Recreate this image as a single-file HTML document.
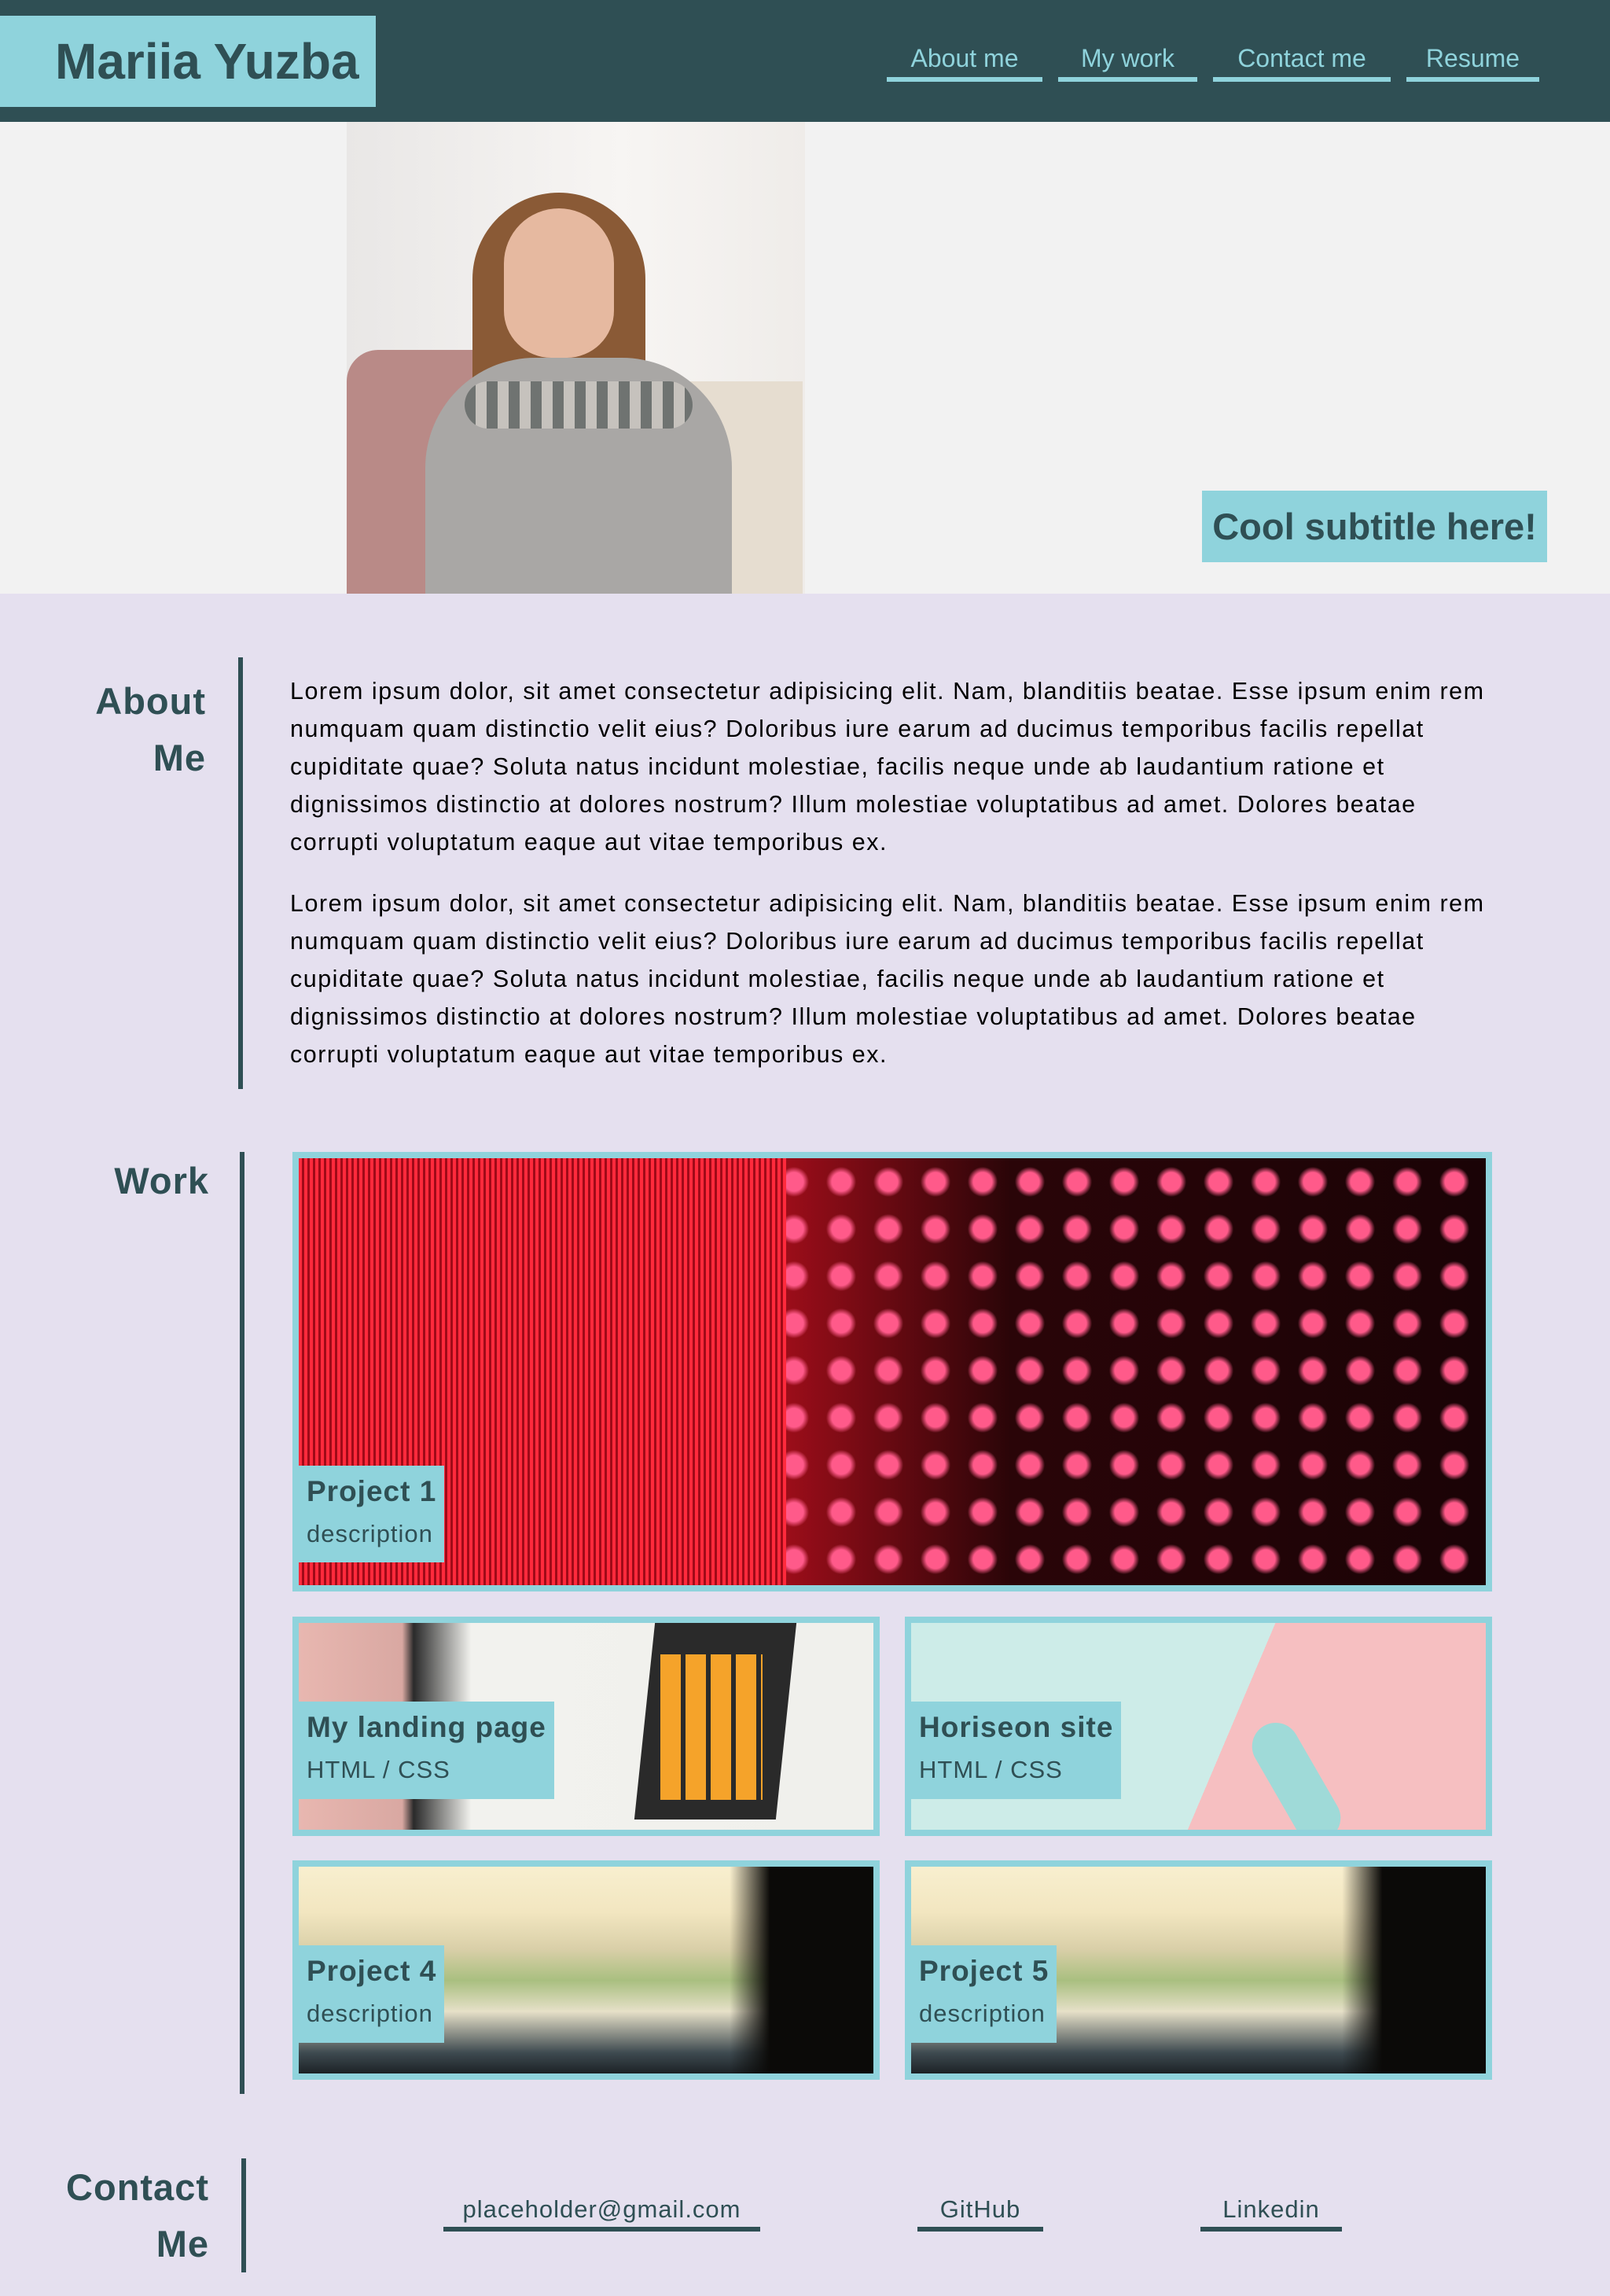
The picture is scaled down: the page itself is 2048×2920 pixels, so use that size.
<!DOCTYPE html>
<html><head><meta charset="utf-8">
<style>
*{box-sizing:border-box;margin:0;padding:0}
body{width:2048px;height:2920px;background:#e5e0ef;font-family:"Liberation Sans",sans-serif;position:relative;overflow:hidden;color:#000}
.abs{position:absolute}
header{position:absolute;left:0;top:0;width:2048px;height:155px;background:#2f4f54}
.name{position:absolute;left:0;top:20px;width:478px;height:116px;background:#8fd3dc;color:#2f4f54;font-weight:bold;font-size:64px;line-height:116px;padding-left:70px;white-space:nowrap}
.nav{position:absolute;top:52px;height:52px;border-bottom:6px solid #8fd3dc;color:#8fd3dc;font-size:32px;text-align:center;line-height:44px}
.hero{position:absolute;left:0;top:155px;width:2048px;height:600px;background:#f2f2f2}
.sub{position:absolute;left:1529px;width:439px;height:91px;background:#8fd3dc;color:#2f4f54;font-weight:bold;font-size:47px;line-height:91px;text-align:center}
.vl{position:absolute;width:6px;background:#2f4f54}
.h2{position:absolute;color:#2f4f54;font-weight:bold;font-size:47px;text-align:right;line-height:72px;letter-spacing:1px}
.p{position:absolute;left:369px;width:1540px;font-size:30.5px;line-height:48px;letter-spacing:1.5px}
.card{position:absolute;border:8px solid #8fd3dc;overflow:hidden}
.lab{position:absolute;left:0;background:#8fd3dc;color:#2f4f54;padding:0 10px;white-space:nowrap;letter-spacing:1px}
.lab b{display:block;font-size:37px;line-height:62px;padding-top:2px}
.lab span{display:block;font-size:31px;line-height:46px}
.cl{position:absolute;top:2790px;height:48px;border-bottom:6px solid #2f4f54;font-size:31px;text-align:center;color:#2f4f54;line-height:40px;letter-spacing:1px}
</style></head><body>
<header>
<div class="name">Mariia Yuzba</div>
<div class="nav" style="left:1128px;width:198px">About me</div>
<div class="nav" style="left:1346px;width:177px">My work</div>
<div class="nav" style="left:1543px;width:226px">Contact me</div>
<div class="nav" style="left:1789px;width:169px">Resume</div>
</header>
<div class="hero">
 <div class="abs" style="left:441px;top:0;width:583px;height:600px;background:linear-gradient(90deg,#e9e7e6,#f7f5f3 60%,#efece9);overflow:hidden">
  <div class="abs" style="left:0;top:290px;width:180px;height:310px;background:#b98a87;border-radius:40px 10px 0 0"></div>
  <div class="abs" style="left:380px;top:330px;width:200px;height:270px;background:#e6ddd0;border-radius:60px 0 0 0"></div>
  <div class="abs" style="left:160px;top:90px;width:220px;height:330px;background:#8a5a36;border-radius:110px 110px 40px 40px"></div>
  <div class="abs" style="left:200px;top:110px;width:140px;height:190px;background:#e6b9a0;border-radius:70px 70px 60px 60px"></div>
  <div class="abs" style="left:100px;top:300px;width:390px;height:300px;background:#a9a7a5;border-radius:140px 140px 0 0"></div>
  <div class="abs" style="left:150px;top:330px;width:290px;height:60px;background:repeating-linear-gradient(90deg,#6f7371 0 14px,#c6c2bd 14px 28px);border-radius:40px"></div>
 </div>
 <div class="sub" style="top:469px">Cool subtitle here!</div>
</div>

<div class="vl" style="left:303px;top:836px;height:549px"></div>
<div class="h2" style="left:60px;top:856px;width:202px">About<br>Me</div>
<div class="p" style="top:855px">Lorem ipsum dolor, sit amet consectetur adipisicing elit. Nam, blanditiis beatae. Esse ipsum enim rem numquam quam distinctio velit eius? Doloribus iure earum ad ducimus temporibus facilis repellat cupiditate quae? Soluta natus incidunt molestiae, facilis neque unde ab laudantium ratione et dignissimos distinctio at dolores nostrum? Illum molestiae voluptatibus ad amet. Dolores beatae corrupti voluptatum eaque aut vitae temporibus ex.</div>
<div class="p" style="top:1125px">Lorem ipsum dolor, sit amet consectetur adipisicing elit. Nam, blanditiis beatae. Esse ipsum enim rem numquam quam distinctio velit eius? Doloribus iure earum ad ducimus temporibus facilis repellat cupiditate quae? Soluta natus incidunt molestiae, facilis neque unde ab laudantium ratione et dignissimos distinctio at dolores nostrum? Illum molestiae voluptatibus ad amet. Dolores beatae corrupti voluptatum eaque aut vitae temporibus ex.</div>

<div class="vl" style="left:305px;top:1465px;height:1198px"></div>
<div class="h2" style="left:60px;top:1466px;width:206px">Work</div>

<div class="card" style="left:372px;top:1465px;width:1526px;height:559px;background:radial-gradient(circle at 50% 50%,#ff5a8a 0 28%,transparent 45%) 0 0/60px 60px,linear-gradient(90deg,#e0152d,#c0101f 35%,#2a0508 60%,#1a0306);">
 <div class="abs" style="left:0;top:0;width:620px;height:559px;background:repeating-linear-gradient(90deg,#ff2a3c 0 4px,#a00a18 4px 7px)"></div>
 <div class="lab" style="top:391px;height:123px"><b>Project 1</b><span>description</span></div>
</div>

<div class="card" style="left:372px;top:2056px;width:747px;height:279px;background:linear-gradient(90deg,#e8b7b0 0,#d9a8a2 18%,#2a2a2a 20%,#f2f2ee 30%,#f0f0ec 100%)">
 <div class="abs" style="left:440px;top:0;width:180px;height:250px;background:#2a2a2a;transform:skewX(-6deg)"></div>
 <div class="abs" style="left:460px;top:40px;width:130px;height:185px;background:repeating-linear-gradient(90deg,#f5a32a 0 26px,#2a2a2a 26px 32px)"></div>
 <div class="lab" style="top:100px;height:124px"><b>My landing page</b><span>HTML / CSS</span></div>
</div>
<div class="card" style="left:1151px;top:2056px;width:747px;height:279px;background:linear-gradient(113deg,#cdece8 0 55%,#f6bfc1 55%)">
 <div class="abs" style="left:460px;top:120px;width:60px;height:165px;background:#9fdad8;border-radius:30px;transform:rotate(-30deg)"></div>
 <div class="lab" style="top:100px;height:124px"><b>Horiseon site</b><span>HTML / CSS</span></div>
</div>

<div class="card" style="left:372px;top:2366px;width:747px;height:279px;background:linear-gradient(90deg,transparent 75%,#0b0a08 82%),linear-gradient(180deg,#f8efcf 0,#f2e6c0 22%,#d9cfa8 40%,#a9bf80 55%,#e6e0c8 70%,#3e4a50 90%,#1c2226 100%)">
 <div class="lab" style="top:100px;height:124px"><b>Project 4</b><span>description</span></div>
</div>
<div class="card" style="left:1151px;top:2366px;width:747px;height:279px;background:linear-gradient(90deg,transparent 75%,#0b0a08 82%),linear-gradient(180deg,#f8efcf 0,#f2e6c0 22%,#d9cfa8 40%,#a9bf80 55%,#e6e0c8 70%,#3e4a50 90%,#1c2226 100%)">
 <div class="lab" style="top:100px;height:124px"><b>Project 5</b><span>description</span></div>
</div>

<div class="vl" style="left:307px;top:2745px;height:145px"></div>
<div class="h2" style="left:60px;top:2746px;width:206px">Contact<br>Me</div>
<div class="cl" style="left:564px;width:403px">placeholder@gmail.com</div>
<div class="cl" style="left:1167px;width:160px">GitHub</div>
<div class="cl" style="left:1527px;width:180px">Linkedin</div>
</body></html>
